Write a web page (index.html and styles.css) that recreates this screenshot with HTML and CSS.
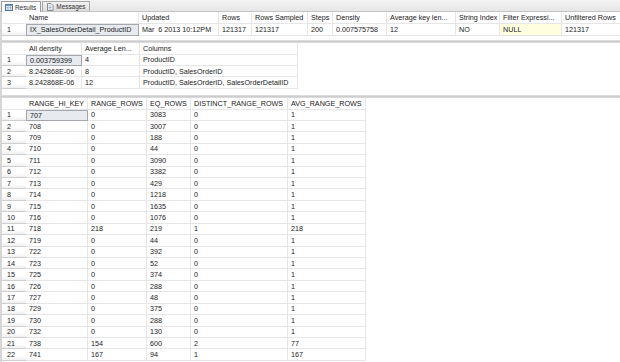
FILE: index.html
```html
<!DOCTYPE html>
<html lang="en">
<head>
    <meta charset="UTF-8">
    <title>Results</title>
    <link rel="stylesheet" href="styles.css">
</head>
<body>
    <div class="tabs">
        <div class="tab active">
            <svg class="tab-icon" width="8" height="7" viewBox="0 0 8 7">
                <rect x="0.5" y="0.5" width="7" height="6" fill="#fff" stroke="#4a6f9c"/>
                <rect x="0.5" y="0.5" width="7" height="1.6" fill="#6f94c4"/>
                <path d="M0.5 3.5h7M0.5 5h7M3 2v4.5M5.5 2v4.5" stroke="#8aa3c2" stroke-width="0.6"/>
            </svg>
            <span>Results</span>
        </div>
        <div class="tab">
            <svg class="tab-icon" width="8" height="8" viewBox="0 0 8 8">
                <path d="M1.5 0.5h3.5l2 2v5h-5.5z" fill="#fff" stroke="#707070" stroke-width="0.8"/>
                <path d="M2.5 3h3M2.5 4.5h3M2.5 6h3" stroke="#5a7fb0" stroke-width="0.6"/>
            </svg>
            <span>Messages</span>
        </div>
    </div>

    <div class="panel panel-top">
        <div class="row grid-a head">
            <div class="c rh"></div>
            <div class="c">Name</div>
            <div class="c">Updated</div>
            <div class="c">Rows</div>
            <div class="c">Rows Sampled</div>
            <div class="c">Steps</div>
            <div class="c">Density</div>
            <div class="c">Average key len...</div>
            <div class="c">String Index</div>
            <div class="c">Filter Expressi...</div>
            <div class="c">Unfiltered Rows</div>
        </div>
        <div class="row grid-a tall">
            <div class="c rh">1</div>
            <div class="c sel">IX_SalesOrderDetail_ProductID</div>
            <div class="c">Mar  6 2013 10:12PM</div>
            <div class="c">121317</div>
            <div class="c">121317</div>
            <div class="c">200</div>
            <div class="c">0.007575758</div>
            <div class="c">12</div>
            <div class="c">NO</div>
            <div class="c null">NULL</div>
            <div class="c">121317</div>
        </div>
    </div>

    <div class="splitter"></div>

    <div class="panel panel-mid">
        <div class="row grid-b head">
            <div class="c rh"></div>
            <div class="c">All density</div>
            <div class="c">Average Len...</div>
            <div class="c">Columns</div>
        </div>
        <div class="row grid-b">
            <div class="c rh">1</div>
            <div class="c sel">0.003759399</div>
            <div class="c">4</div>
            <div class="c">ProductID</div>
        </div>
        <div class="row grid-b">
            <div class="c rh">2</div>
            <div class="c">8.242868E-06</div>
            <div class="c">8</div>
            <div class="c">ProductID, SalesOrderID</div>
        </div>
        <div class="row grid-b">
            <div class="c rh">3</div>
            <div class="c">8.242868E-06</div>
            <div class="c">12</div>
            <div class="c">ProductID, SalesOrderID, SalesOrderDetailID</div>
        </div>
    </div>

    <div class="splitter"></div>

    <div class="panel panel-low">
        <div class="row grid-c head">
            <div class="c rh"></div>
            <div class="c">RANGE_HI_KEY</div>
            <div class="c">RANGE_ROWS</div>
            <div class="c">EQ_ROWS</div>
            <div class="c">DISTINCT_RANGE_ROWS</div>
            <div class="c">AVG_RANGE_ROWS</div>
        </div>
        <div class="row grid-c"><div class="c rh">1</div><div class="c sel">707</div><div class="c">0</div><div class="c">3083</div><div class="c">0</div><div class="c">1</div></div>
        <div class="row grid-c"><div class="c rh">2</div><div class="c">708</div><div class="c">0</div><div class="c">3007</div><div class="c">0</div><div class="c">1</div></div>
        <div class="row grid-c"><div class="c rh">3</div><div class="c">709</div><div class="c">0</div><div class="c">188</div><div class="c">0</div><div class="c">1</div></div>
        <div class="row grid-c"><div class="c rh">4</div><div class="c">710</div><div class="c">0</div><div class="c">44</div><div class="c">0</div><div class="c">1</div></div>
        <div class="row grid-c"><div class="c rh">5</div><div class="c">711</div><div class="c">0</div><div class="c">3090</div><div class="c">0</div><div class="c">1</div></div>
        <div class="row grid-c"><div class="c rh">6</div><div class="c">712</div><div class="c">0</div><div class="c">3382</div><div class="c">0</div><div class="c">1</div></div>
        <div class="row grid-c"><div class="c rh">7</div><div class="c">713</div><div class="c">0</div><div class="c">429</div><div class="c">0</div><div class="c">1</div></div>
        <div class="row grid-c"><div class="c rh">8</div><div class="c">714</div><div class="c">0</div><div class="c">1218</div><div class="c">0</div><div class="c">1</div></div>
        <div class="row grid-c"><div class="c rh">9</div><div class="c">715</div><div class="c">0</div><div class="c">1635</div><div class="c">0</div><div class="c">1</div></div>
        <div class="row grid-c"><div class="c rh">10</div><div class="c">716</div><div class="c">0</div><div class="c">1076</div><div class="c">0</div><div class="c">1</div></div>
        <div class="row grid-c"><div class="c rh">11</div><div class="c">718</div><div class="c">218</div><div class="c">219</div><div class="c">1</div><div class="c">218</div></div>
        <div class="row grid-c"><div class="c rh">12</div><div class="c">719</div><div class="c">0</div><div class="c">44</div><div class="c">0</div><div class="c">1</div></div>
        <div class="row grid-c"><div class="c rh">13</div><div class="c">722</div><div class="c">0</div><div class="c">392</div><div class="c">0</div><div class="c">1</div></div>
        <div class="row grid-c"><div class="c rh">14</div><div class="c">723</div><div class="c">0</div><div class="c">52</div><div class="c">0</div><div class="c">1</div></div>
        <div class="row grid-c"><div class="c rh">15</div><div class="c">725</div><div class="c">0</div><div class="c">374</div><div class="c">0</div><div class="c">1</div></div>
        <div class="row grid-c"><div class="c rh">16</div><div class="c">726</div><div class="c">0</div><div class="c">288</div><div class="c">0</div><div class="c">1</div></div>
        <div class="row grid-c"><div class="c rh">17</div><div class="c">727</div><div class="c">0</div><div class="c">48</div><div class="c">0</div><div class="c">1</div></div>
        <div class="row grid-c"><div class="c rh">18</div><div class="c">729</div><div class="c">0</div><div class="c">375</div><div class="c">0</div><div class="c">1</div></div>
        <div class="row grid-c"><div class="c rh">19</div><div class="c">730</div><div class="c">0</div><div class="c">288</div><div class="c">0</div><div class="c">1</div></div>
        <div class="row grid-c"><div class="c rh">20</div><div class="c">732</div><div class="c">0</div><div class="c">130</div><div class="c">0</div><div class="c">1</div></div>
        <div class="row grid-c"><div class="c rh">21</div><div class="c">738</div><div class="c">154</div><div class="c">600</div><div class="c">2</div><div class="c">77</div></div>
        <div class="row grid-c"><div class="c rh">22</div><div class="c">741</div><div class="c">167</div><div class="c">94</div><div class="c">1</div><div class="c">167</div></div>
    </div>
</body>
</html>
```

FILE: styles.css
```css
* {
    margin: 0;
    padding: 0;
    box-sizing: border-box;
}

body {
    width: 620px;
    height: 362px;
    overflow: hidden;
    background-color: #ffffff;
    color: #1b1b1b;
    font-family: "Liberation Sans", Arial, sans-serif;
    font-size: 7.2px;
}

/* tab strip */
.tabs {
    height: 12px;
    display: flex;
    align-items: flex-end;
    gap: 1px;
    padding-left: 1px;
    background: linear-gradient(#f4f4f4, #e6e6e6);
    border-bottom: 1px solid #c4c4c4;
}

.tab {
    height: 10px;
    display: flex;
    align-items: center;
    gap: 2px;
    padding: 0 4px 0 3px;
    font-size: 6.4px;
    color: #333;
    background: linear-gradient(#f2f2f2, #dcdcdc);
    border: 1px solid #a9a9a9;
    border-bottom: none;
    border-radius: 1px 1px 0 0;
}

.tab.active {
    height: 11px;
    margin-bottom: -1px;
    background: #fbfbfb;
    border-color: #9c9c9c;
}

.tab-icon {
    flex: none;
}

/* result grids */
.panel {
    border-left: 2px solid #d6d6d6;
    overflow: hidden;
}

.panel-top {
    height: 28px;
}

.panel-mid {
    height: 52px;
}

.panel-low {
    height: 264px;
}

.splitter {
    height: 3px;
    background: linear-gradient(#e2e2e2, #cdcdcd 50%, #dedede);
}

.row {
    display: grid;
    height: 11.43px;
    width: max-content;
}

.row.head {
    height: 11.5px;
}

.row.tall {
    height: 12px;
}

.grid-a {
    grid-template-columns: 24px 113px 80px 33px 56px 25px 54px 69px 44px 62px 60px;
}

.grid-b {
    grid-template-columns: 24px 56px 58px 158px;
}

.grid-c {
    grid-template-columns: 24px 62px 59px 44px 97px 78px;
}

.c {
    display: flex;
    align-items: center;
    padding-left: 3px;
    white-space: pre;
    overflow: hidden;
    border-right: 1px solid #e6e6e6;
    border-bottom: 1px solid #e6e6e6;
}

.head .c {
    color: #222;
}

.rh {
    padding-left: 5px;
    border-right: none;
    background: linear-gradient(#ffffff 60%, #f0f0f0);
    border-bottom: 1px solid #cfcfcf;
}

.head .rh {
    background: #ffffff;
    border-bottom: 1px solid #e6e6e6;
}

.sel {
    background-color: #e7eaee;
    border: 1px solid #a4a8ad;
}

.null {
    background-color: #ffffe0;
}
```
